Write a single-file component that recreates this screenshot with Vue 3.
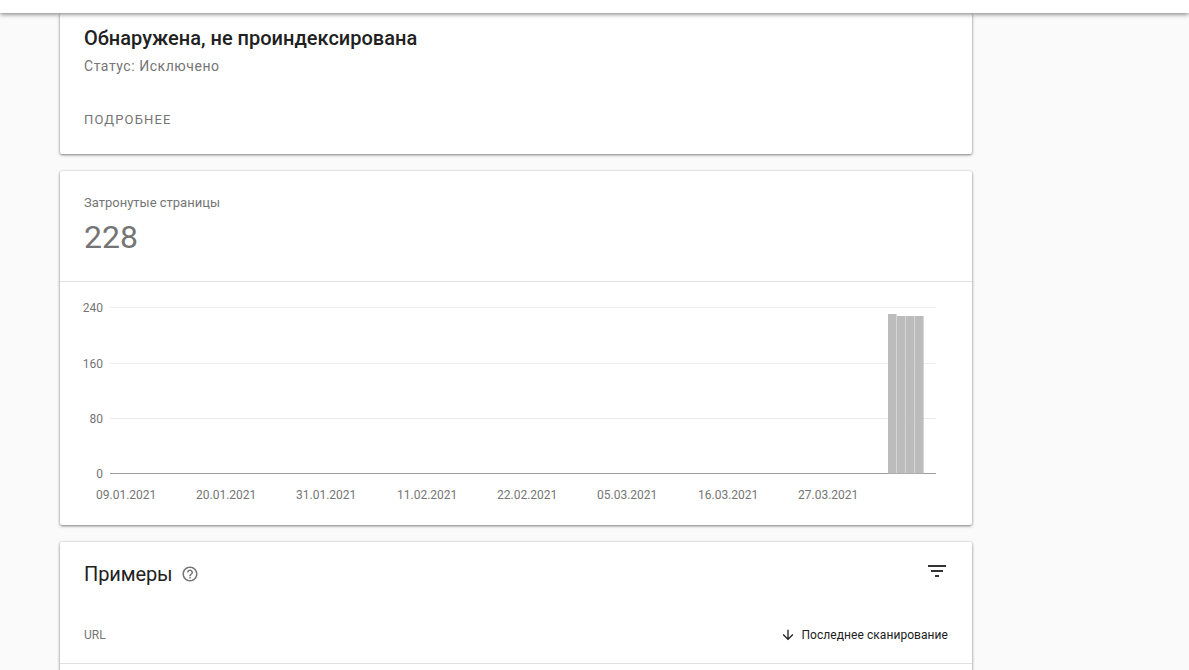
<template>
  <div class="page">
    <header class="topbar"></header>

    <main class="content">
      <section class="card issue">
        <h2>Обнаружена, не проиндексирована</h2>
        <p class="status">Статус: Исключено</p>
        <a class="more">ПОДРОБНЕЕ</a>
      </section>

      <section class="card">
        <div class="stat">
          <div class="stat-label">Затронутые страницы</div>
          <div class="stat-value">228</div>
        </div>
        <svg class="chart" width="912" height="243" viewBox="0 0 912 243">
          <g v-for="t in ticks" :key="t.label">
            <line x1="50" x2="876" :y1="t.y" :y2="t.y" :stroke="t.label === '0' ? '#9e9e9e' : '#ececec'" />
            <text class="axis" x="43" :y="t.y + 4" text-anchor="end">{{ t.label }}</text>
          </g>
          <rect
            v-for="b in bars"
            :key="b.x"
            :x="b.x"
            :y="b.y"
            width="8.6"
            :height="191.5 - b.y"
            fill="#bcbcbc"
          />
          <text v-for="d in dates" :key="d.x" class="axis" :x="d.x" y="217">{{ d.label }}</text>
        </svg>
      </section>

      <section class="card examples">
        <div class="examples-head">
          <h3>Примеры</h3>
          <svg class="help" width="18" height="18" viewBox="0 0 24 24" fill="#757575">
            <path d="M11 18h2v-2h-2v2zm1-16C6.48 2 2 6.48 2 12s4.48 10 10 10 10-4.48 10-10S17.52 2 12 2zm0 18c-4.41 0-8-3.59-8-8s3.59-8 8-8 8 3.59 8 8-3.59 8-8 8zm0-14c-2.21 0-4 1.79-4 4h2c0-1.1.9-2 2-2s2 .9 2 2c0 2-3 1.75-3 5h2c0-2.25 3-2.5 3-5 0-2.21-1.79-4-4-4z" />
          </svg>
          <svg class="filter" width="24" height="24" viewBox="0 0 24 24" fill="#333">
            <path d="M3 6h18v2H3V6zm3 5h12v2H6v-2zm4 5h4v2h-4v-2z" />
          </svg>
        </div>
        <div class="table-head">
          <span class="url">URL</span>
          <span class="sort">
            <svg width="16" height="16" viewBox="0 0 24 24" fill="#212121">
              <path d="M20 12l-1.41-1.41L13 16.17V4h-2v12.17l-5.58-5.59L4 12l8 8 8-8z" />
            </svg>
            Последнее сканирование
          </span>
        </div>
      </section>
    </main>
  </div>
</template>

<script setup>
const ticks = [
  { label: "240", y: 25.5 },
  { label: "160", y: 81.5 },
  { label: "80", y: 136.5 },
  { label: "0", y: 191.5 }
];

const bars = [
  { x: 828, y: 32 },
  { x: 837, y: 34 },
  { x: 846, y: 34 },
  { x: 855, y: 34 }
];

const dates = [
  { label: "09.01.2021", x: 36 },
  { label: "20.01.2021", x: 136 },
  { label: "31.01.2021", x: 236 },
  { label: "11.02.2021", x: 337 },
  { label: "22.02.2021", x: 437 },
  { label: "05.03.2021", x: 537 },
  { label: "16.03.2021", x: 638 },
  { label: "27.03.2021", x: 738 }
];
</script>

<style>
html,
body {
  height: 100%;
  overflow: hidden;
  background: #fafafa;
}
</style>

<style scoped>
.page {
  height: 670px;
  overflow: hidden;
  background: #fafafa;
  font-family: Roboto, "Noto Sans", sans-serif;
  color: #212121;
}

.topbar {
  position: relative;
  z-index: 2;
  height: 13px;
  background: #fff;
  box-shadow: 0 1px 5px rgba(0, 0, 0, 0.55);
}

.content {
  width: 912px;
  margin-left: 60px;
  display: flex;
  flex-direction: column;
  gap: 17px;
}

.card {
  background: #fff;
  border-radius: 2px;
  box-shadow: 0 1px 3px rgba(0, 0, 0, 0.5), 0 0 2px rgba(0, 0, 0, 0.08);
}

.issue {
  height: 141px;
  box-sizing: border-box;
  padding: 13px 24px 0;
}

.issue h2 {
  margin: 0;
  font-size: 20px;
  line-height: 24px;
  font-weight: 500;
  color: #212121;
}

.status {
  margin: 6px 0 0;
  font-size: 14px;
  line-height: 20px;
  letter-spacing: 0.55px;
  color: #757575;
}

.more {
  display: block;
  margin-top: 34px;
  font-size: 13px;
  line-height: 20px;
  letter-spacing: 1.15px;
  color: #757575;
}

.stat {
  height: 111px;
  box-sizing: border-box;
  padding: 24px 24px 0;
  border-bottom: 1px solid #e0e0e0;
}

.stat-label {
  font-size: 13px;
  line-height: 16px;
  color: #757575;
}

.stat-value {
  margin-top: 6px;
  font-size: 32px;
  line-height: 40px;
  color: #757575;
}

.chart {
  display: block;
}

.axis {
  font-family: Roboto, "Noto Sans", sans-serif;
  font-size: 12px;
  fill: #757575;
}

.examples {
  height: 200px;
}

.examples-head {
  display: flex;
  align-items: center;
  height: 64px;
  padding: 0 24px;
}

.examples-head h3 {
  margin: 0;
  font-size: 20px;
  font-weight: 400;
  letter-spacing: -0.1px;
  color: #212121;
}

.help {
  margin-left: 8px;
}

.filter {
  margin-left: auto;
  margin-right: -1px;
  margin-top: -6px;
}

.table-head {
  display: flex;
  align-items: center;
  justify-content: space-between;
  height: 57px;
  padding: 0 24px;
  border-bottom: 1px solid #e0e0e0;
  font-size: 12px;
}

.url {
  color: #757575;
}

.sort {
  display: flex;
  align-items: center;
  gap: 6px;
  letter-spacing: 0.06px;
  color: #212121;
}
</style>
